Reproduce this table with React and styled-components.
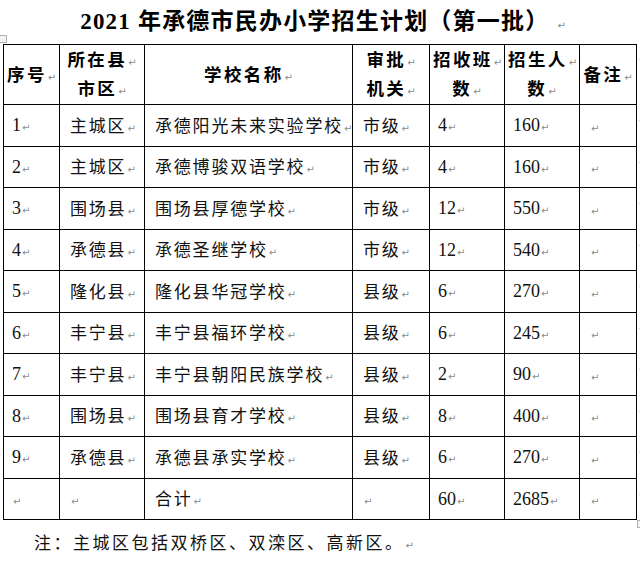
import React from 'react';
import styled, { createGlobalStyle } from 'styled-components';

const SCHOOLS = [
  { no: '1', area: '主城区', name: '承德阳光未来实验学校', level: '市级', classes: '4', students: '160' },
  { no: '2', area: '主城区', name: '承德博骏双语学校', level: '市级', classes: '4', students: '160' },
  { no: '3', area: '围场县', name: '围场县厚德学校', level: '市级', classes: '12', students: '550' },
  { no: '4', area: '承德县', name: '承德圣继学校', level: '市级', classes: '12', students: '540' },
  { no: '5', area: '隆化县', name: '隆化县华冠学校', level: '县级', classes: '6', students: '270' },
  { no: '6', area: '丰宁县', name: '丰宁县福环学校', level: '县级', classes: '6', students: '245' },
  { no: '7', area: '丰宁县', name: '丰宁县朝阳民族学校', level: '县级', classes: '2', students: '90' },
  { no: '8', area: '围场县', name: '围场县育才学校', level: '县级', classes: '8', students: '400' },
  { no: '9', area: '承德县', name: '承德县承实学校', level: '县级', classes: '6', students: '270' },
];

const HEADERS = [
  ['序号'],
  ['所在县', '市区'],
  ['学校名称'],
  ['审批', '机关'],
  ['招收班', '数'],
  ['招生人', '数'],
  ['备注'],
];

const COL_WIDTHS = [56, 85, 208, 77, 75, 75, 57];

const GlobalStyle = createGlobalStyle`
  body {
    margin: 0;
    background: #fff;
    color: #000;
    font-family: "Liberation Serif", "Noto Sans CJK SC", serif;
  }
`;

const Page = styled.div`
  width: 640px;
  height: 566px;
  overflow: hidden;
`;

const Title = styled.h1`
  margin: 0;
  height: 44px;
  padding: 2px 0 0 6px;
  box-sizing: border-box;
  line-height: 40px;
  text-align: center;
  font-size: 23px;
  font-weight: 700;
  letter-spacing: 1.2px;
`;

const Mark = styled.span`
  font-family: "DejaVu Sans", sans-serif;
  font-size: 10px;
  font-weight: 400;
  color: #8c8c8c;
  letter-spacing: 0;
  margin-left: 1px;
`;

const TitleMark = styled(Mark)`
  margin-left: 8px;
`;

const TableWrap = styled.div`
  position: relative;
  margin-left: 3px;
  width: 634px;
`;

const Handle = styled.span`
  position: absolute;
  width: 6px;
  height: 6px;
  border: 1px solid #b0b0b0;
  background: #f4f4f4;
  ${p => (p.$end ? 'right: -8px; bottom: -8px;' : 'left: -4px; top: -9px;')}
`;

const Table = styled.table`
  border-collapse: collapse;
  table-layout: fixed;
  width: 633px;
`;

const HeadRow = styled.tr`
  height: 52px;
`;

const Row = styled.tr`
  height: 41.5px;
`;

const HeadCell = styled.th`
  position: relative;
  border: 1px solid #000;
  padding: 1px 3px 0;
  text-align: center;
  vertical-align: middle;
  font-family: "Noto Sans CJK SC", sans-serif;
  font-size: 17.5px;
  font-weight: 700;
  letter-spacing: 2.4px;
  line-height: 25px;
  &:last-child::after {
    content: '↵';
    position: absolute;
    left: calc(100% + 3px);
    top: 2px;
    font-family: "DejaVu Sans", sans-serif;
    font-size: 9px;
    font-weight: 400;
    color: #999;
  }
`;

const Line = styled.div`
  white-space: nowrap;
`;

const Cell = styled.td`
  position: relative;
  border: 1px solid #000;
  padding: 3px 4px 0 ${p => (p.$num ? '8px' : '10px')};
  vertical-align: middle;
  white-space: nowrap;
  font-family: ${p => (p.$num ? '"Liberation Serif", serif' : '"Noto Sans CJK SC", sans-serif')};
  font-size: ${p => (p.$num ? '18px' : '17px')};
  letter-spacing: ${p => (p.$num ? '0' : '1.8px')};
  line-height: 22px;
  color: #111;
  &:last-child::after {
    content: '↵';
    position: absolute;
    left: calc(100% + 3px);
    top: 4px;
    font-family: "DejaVu Sans", sans-serif;
    font-size: 9px;
    color: #999;
  }
`;

const Note = styled.p`
  margin: 11px 0 0;
  padding-left: 34px;
  font-family: "Noto Sans CJK SC", sans-serif;
  font-size: 17px;
  letter-spacing: 2.5px;
  line-height: 22px;
  color: #111;
`;

const Text = ({ children }) => (
  <>
    {children}
    <Mark>↵</Mark>
  </>
);

const App = () => {
  const rows = [
    ...SCHOOLS,
    { no: '', area: '', name: '合计', level: '', classes: '60', students: '2685' },
  ];

  return (
    <Page>
      <GlobalStyle />
      <Title>
        2021 年承德市民办小学招生计划（第一批）<TitleMark>↵</TitleMark>
      </Title>
      <TableWrap>
        <Handle />
        <Table>
          <colgroup>
            {COL_WIDTHS.map((w, i) => (
              <col key={i} style={{ width: w }} />
            ))}
          </colgroup>
          <thead>
            <HeadRow>
              {HEADERS.map((lines, i) => (
                <HeadCell key={i}>
                  {lines.map(line => (
                    <Line key={line}>
                      <Text>{line}</Text>
                    </Line>
                  ))}
                </HeadCell>
              ))}
            </HeadRow>
          </thead>
          <tbody>
            {rows.map((r, i) => (
              <Row key={i}>
                <Cell $num><Text>{r.no}</Text></Cell>
                <Cell><Text>{r.area}</Text></Cell>
                <Cell><Text>{r.name}</Text></Cell>
                <Cell><Text>{r.level}</Text></Cell>
                <Cell $num><Text>{r.classes}</Text></Cell>
                <Cell $num><Text>{r.students}</Text></Cell>
                <Cell><Text></Text></Cell>
              </Row>
            ))}
          </tbody>
        </Table>
        <Handle $end />
      </TableWrap>
      <Note>
        <Text>注：主城区包括双桥区、双滦区、高新区。</Text>
      </Note>
    </Page>
  );
};

export default App;
